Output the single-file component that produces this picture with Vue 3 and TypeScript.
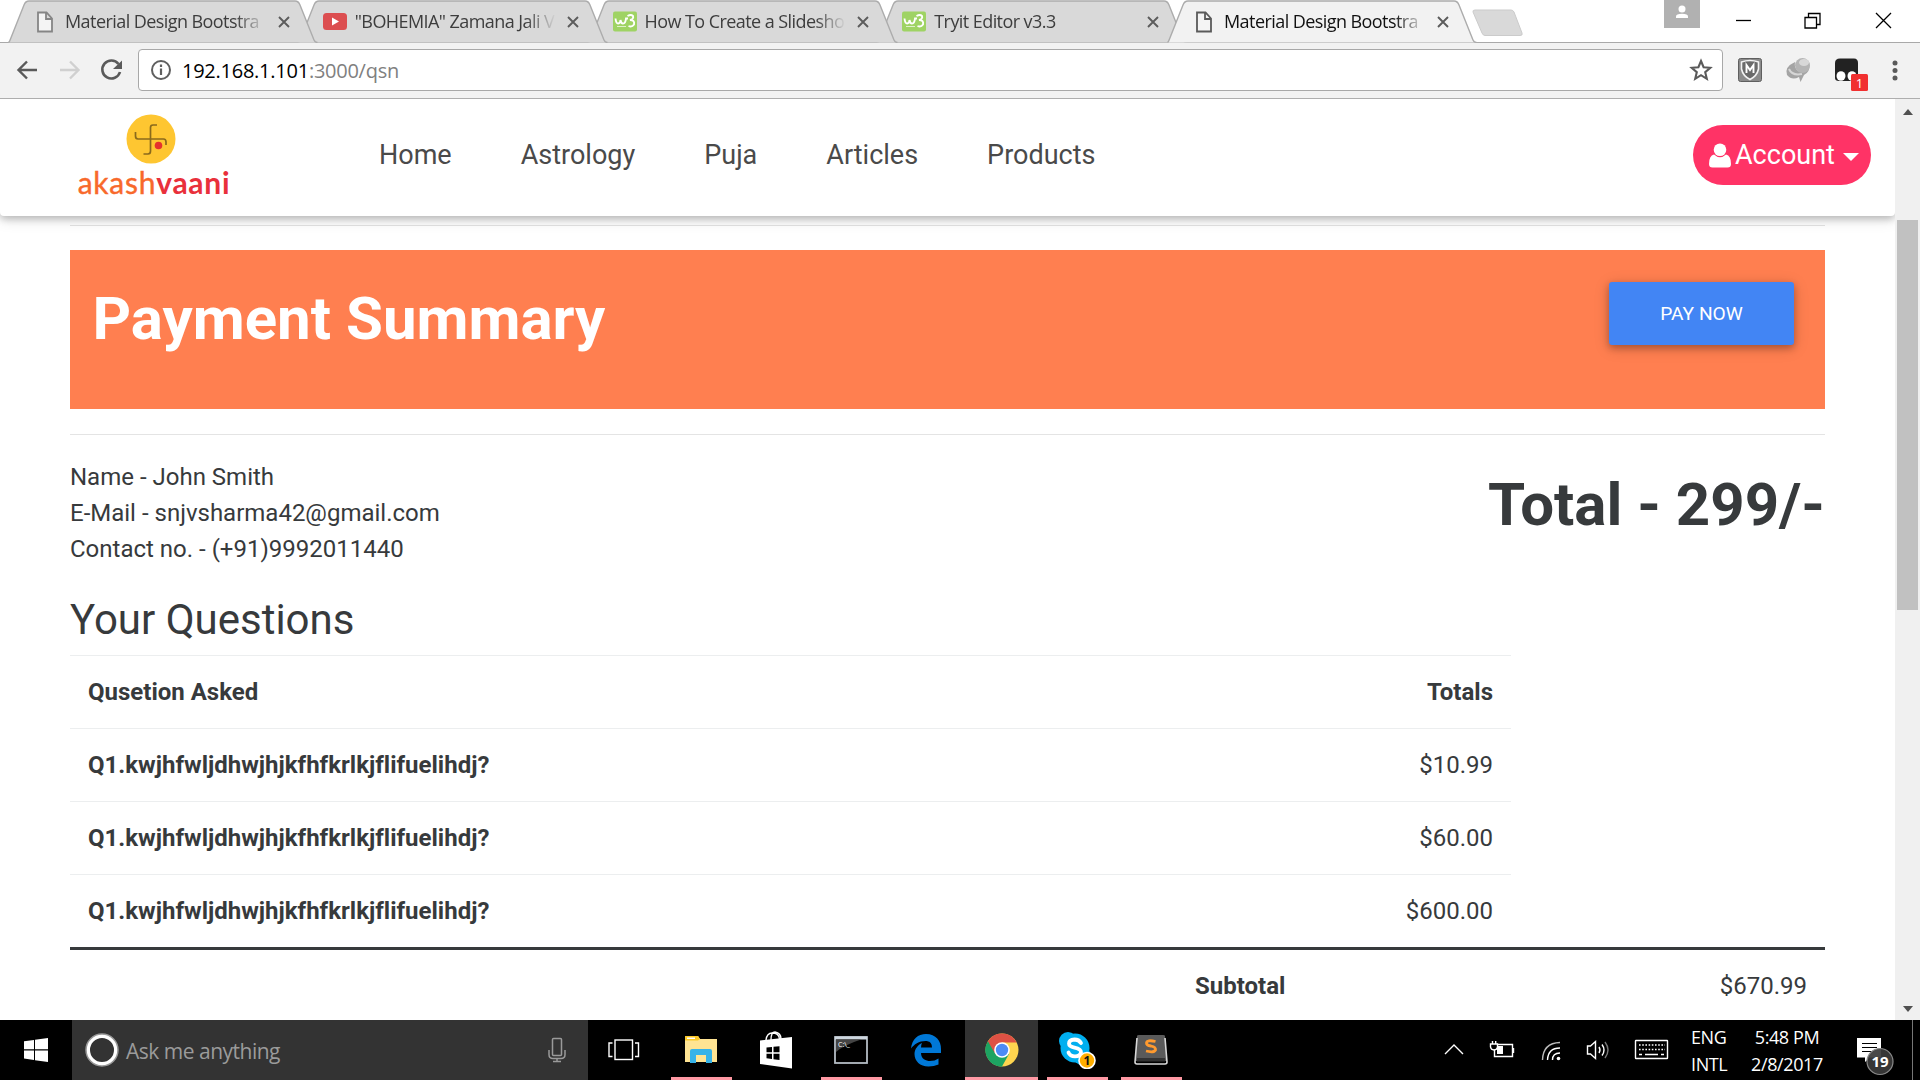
<script setup lang="ts">
interface Tab { title: string; icon: 'doc' | 'yt' | 'w3'; active?: boolean }

const tabs: Tab[] = [
  { title: 'Material Design Bootstra', icon: 'doc' },
  { title: '"BOHEMIA" Zamana Jali V', icon: 'yt' },
  { title: 'How To Create a Slidesho', icon: 'w3' },
  { title: 'Tryit Editor v3.3', icon: 'w3' },
  { title: 'Material Design Bootstra', icon: 'doc', active: true },
]
const links = ['Home', 'Astrology', 'Puja', 'Articles', 'Products']
const questions = [
  { text: 'Q1.kwjhfwljdhwjhjkfhfkrlkjflifuelihdj?', price: '$10.99' },
  { text: 'Q1.kwjhfwljdhwjhjkfhfkrlkjflifuelihdj?', price: '$60.00' },
  { text: 'Q1.kwjhfwljdhwjhjkfhfkrlkjflifuelihdj?', price: '$600.00' },
]
</script>

<template>
  <div class="screen">
    <div class="strip">
      <div v-for="(t, i) in tabs" :key="i" class="tab" :class="{ active: t.active }" :style="{ zIndex: t.active ? 10 : 8 - i }">
        <svg class="shape" width="311" height="43" viewBox="0 0 311 43">
          <path d="M0.5 42.5 Q1.500 42 2.500 39 L16 5 Q17.500 1 21 1 L287 1 Q290.500 1 292 5 L306 40 Q307 42.500 309.500 42.500 Z" :fill="t.active ? '#f2f2f2' : '#d9d9d9'" />
          <path d="M0.5 42.5 Q1.500 42 2.500 39 L16 5 Q17.500 1 21 1 L287 1 Q290.500 1 292 5 L306 40 Q307 42.500 309.500 42.500" fill="none" stroke="#acacac" stroke-width="1.4" />
        </svg>
        <svg v-if="t.icon === 'doc'" class="fav" width="24" height="24" viewBox="0 0 24 24">
          <path d="M5 2.500 H13.500 L19 8.500 V21.500 H5 Z M13 2.500 V9 H19" fill="#f4f4f4" :stroke="t.active ? '#5a5a5a' : '#858585'" stroke-width="1.8" />
        </svg>
        <svg v-else-if="t.icon === 'yt'" class="fav" width="24" height="24" viewBox="0 0 24 24">
          <rect y="3" width="24" height="17" rx="3.500" fill="#dc4e50" /><path d="M9 7.500 L16 11.500 L9 15.500 Z" fill="#fff" />
        </svg>
        <svg v-else class="fav" width="24" height="24" viewBox="0 0 24 24">
          <rect y="1.500" width="24" height="20" rx="2" fill="#9fd364" />
          <path d="M2.500 8.500 Q3 13.500 5.200 13.500 Q7.200 13.500 7.500 10 Q8 13.500 10 13.500 Q12.500 13.500 13 8.500 H15 M14.500 6 Q18 4 20 6 Q21 9 17 10 Q22 10 21 14.500 Q19 17.500 15.500 16" fill="none" stroke="#fff" stroke-width="1.900" />
          <path d="M4 16.500 H13" stroke="#dff1cb" stroke-width="1" />
        </svg>
        <span class="title">{{ t.title }}</span>
        <svg class="x" width="12" height="12" viewBox="0 0 12 12"><path d="M1 1 L11 11 M11 1 L1 11" stroke="#5c5c5c" stroke-width="1.9" /></svg>
      </div>
      <svg class="newtab" width="52" height="28" viewBox="0 0 52 28"><path d="M3 1 H39 Q41 1 42 3 L50 24 Q51 26.500 48 26.500 H13 Q11 26.500 10 24 L1 3 Q0.500 1 3 1 Z" fill="#d9d9d9" stroke="#cbcbcb" /></svg>
      <div class="winctl">
        <div class="avatar"><svg width="36" height="28" viewBox="0 0 36 28"><circle cx="18" cy="9" r="3.500" fill="#fff" /><path d="M12 18 V16.500 Q12 14 18 13.800 Q24 14 24 16.500 V18 Z" fill="#fff" /></svg></div>
        <svg class="wbtns" width="156" height="42" viewBox="0 0 156 42" fill="none" stroke="#000" stroke-width="1.3">
          <path d="M0 20.500 H15" /><path d="M69 17.500 H80.500 V28 H69 Z M72.500 17.500 V13.500 H84 V24.500 H80.500" /><path d="M140 13 L155 28 M155 13 L140 28" />
        </svg>
      </div>
    </div>

    <div class="toolbar">
      <svg class="navs" width="138" height="54" viewBox="0 0 138 54" fill="none" stroke-width="2.4">
        <path d="M37 27 H19 M27 18.500 L18.500 27 L27 35.500" stroke="#5a5a5a" />
        <path d="M60 27 H78 M70 18.500 L78.500 27 L70 35.500" stroke="#d0d0d0" />
        <path d="M118.500 21 A9 9 0 1 0 120 29" stroke="#5a5a5a" stroke-width="2.600" /><path d="M122 17.500 V26 H113 Z" fill="#5a5a5a" />
      </svg>
      <div class="omni">
        <svg width="22" height="22" viewBox="0 0 22 22"><circle cx="11" cy="11" r="9" fill="none" stroke="#5f5f5f" stroke-width="2" /><path d="M11 9.500 V16 M11 5.500 V8" stroke="#5f5f5f" stroke-width="2.200" /></svg>
        <span class="url">192.168.1.101<i>:3000/qsn</i></span>
        <svg class="star" width="24" height="24" viewBox="0 0 24 24"><path d="M12 3 L14.600 9.200 L21.300 9.800 L16.200 14.200 L17.800 20.800 L12 17.200 L6.200 20.800 L7.800 14.200 L2.700 9.800 L9.400 9.200 Z" fill="none" stroke="#5a5a5a" stroke-width="2.100" /></svg>
      </div>
      <svg class="exts" width="197" height="54" viewBox="1 0 197 54">
        <rect x="16.500" y="15.500" width="23" height="23" rx="2" fill="#8a8a8a" stroke="#5f5f5f" />
        <path d="M19.500 19 Q28 16 36.500 19 V26 Q35 33 28 36.500 Q21 33 19.500 26 Z" fill="#6a6a6a" stroke="#f2f2f2" stroke-width="1.600" />
        <path d="M24.500 30 V22 L28 27 L31.500 22 V30" fill="none" stroke="#fff" stroke-width="1.900" />
        <path d="M73 19 Q62 24 65 32 Q70 38 77 34 L78.500 39 L82 32 Q88 29 87.500 22 Q84 31 76 28 Q72 25 73 19 Z" fill="#a4a4a4" />
        <ellipse cx="80.500" cy="22.500" rx="7.500" ry="7.500" fill="#b5b5b5" /><ellipse cx="82" cy="19.500" rx="5" ry="3.500" fill="#d8d8d8" />
        <path d="M67 26 Q70 33 80 31" stroke="#d6d6d6" stroke-width="2" fill="none" />
        <path d="M113 35 V20 Q113 15.500 118 15.500 H132 Q136 15.500 136 20 V38 H117 Q113 38 113 35 Z" fill="#222" /><ellipse cx="119" cy="33" rx="4.500" ry="4.800" fill="#fff" /><ellipse cx="130" cy="33" rx="4.500" ry="4.800" fill="#fff" />
        <rect x="129" y="31" width="17" height="17" rx="1.500" fill="#f13030" /><text x="137.500" y="44.500" fill="#fff" font-size="13" text-anchor="middle">1</text>
        <circle cx="173" cy="20" r="2.500" fill="#5a5a5a" /><circle cx="173" cy="27.500" r="2.500" fill="#5a5a5a" /><circle cx="173" cy="35" r="2.500" fill="#5a5a5a" />
      </svg>
    </div>

    <div class="viewport">
      <div class="page">
        <header class="navbar">
          <div class="logo">
            <svg width="50" height="50" viewBox="0 0 50 50">
              <circle cx="25" cy="25" r="24.500" fill="#fec631" />
              <path d="M31 11 H27 Q24.500 11 24.500 13.500 V37 Q24.500 40 22 40 H17.500 M9.500 18 V22 Q9.500 25 12 25 H37.500 Q40 25 40 28 V31" fill="none" stroke="#8a6a1c" stroke-width="1.700" />
              <circle cx="32.500" cy="31.500" r="3.800" fill="#e5322d" />
            </svg>
            <div class="brand"><span>akash</span><b>vaani</b></div>
          </div>
          <nav><a v-for="l in links" :key="l">{{ l }}</a></nav>
          <button class="account">
            <svg width="22" height="25" viewBox="0 0 22 25" fill="#fff"><circle cx="11" cy="6.800" r="6.300" /><path d="M5 11.500 Q11 17 17 11.500 Q22 12.500 22 21 Q22 24.500 18.500 24.500 H3.500 Q0 24.500 0 21 Q0 12.500 5 11.500 Z" /></svg>
            <span>Account</span><i class="caret"></i>
          </button>
        </header>
        <main>
          <hr class="first" />
          <section class="banner"><h1>Payment Summary</h1><button class="pay">PAY NOW</button></section>
          <hr class="second" />
          <section class="info">
            <div class="who"><div>Name - John Smith</div><div>E-Mail - snjvsharma42@gmail.com</div><div>Contact no. - (+91)9992011440</div></div>
            <div class="total">Total - 299/-</div>
          </section>
          <h2>Your Questions</h2>
          <div class="rows">
            <div class="row head"><b>Qusetion Asked</b><b>Totals</b></div>
            <div v-for="(q, i) in questions" :key="i" class="row"><b>{{ q.text }}</b><span>{{ q.price }}</span></div>
          </div>
          <div class="sub"><b>Subtotal</b><span>$670.99</span></div>
        </main>
      </div>
      <div class="scroll"><i class="up"></i><div class="thumb"></div><i class="down"></i></div>
    </div>

    <footer class="taskbar">
      <div class="start"><svg width="24" height="24" viewBox="0 0 24 24" fill="#fff"><path d="M0 3.300 L10 1.900 V11.300 H0 Z M11 1.700 L24 0 V11.300 H11 Z M0 12.500 H10 V22 L0 20.600 Z M11 12.500 H24 V24 L11 22.200 Z" /></svg></div>
      <div class="search">
        <svg width="34" height="34" viewBox="0 0 34 34"><circle cx="17" cy="17" r="14" fill="none" stroke="#fff" stroke-width="4" /><circle cx="17" cy="17" r="16" fill="none" stroke="#999" stroke-width="1.500" /></svg>
        <span>Ask me anything</span>
        <svg class="mic" width="18" height="26" viewBox="0 0 18 26" fill="none" stroke="#9a9a9a" stroke-width="1.500"><rect x="4.500" y="1.500" width="9" height="17" rx="1" /><path d="M1 13 V17.500 Q1 21.500 5 21.500 H13 Q17 21.500 17 17.500 V13 M9 21.500 V24.500 M5 24.500 H13" /></svg>
      </div>
      <div class="app tv"><svg width="32" height="22" viewBox="0 0 32 22" fill="none" stroke="#fff" stroke-width="1.400"><rect x="7" y="1" width="17.500" height="19.500" /><path d="M4.500 4 H1 V17.500 H4.500 M27 4 H30.500 V17.500 H27" /></svg></div>
      <div class="app open"><svg width="34" height="30" viewBox="0 0 34 30"><path d="M1 2 Q1 1 2 1 H14 L16 4 H33 V27 H1 Z" fill="#ffe493" /><path d="M1 2 Q1 1 2 1 H14 L16 4 L14 5.500 H1 Z" fill="#fbc928" /><rect x="3" y="2.500" width="8" height="1.500" fill="#fff" /><path d="M6 28 V16 Q6 14 8 14 H26 Q28 14 28 16 V28 H22 V20 H12 V28 Z" fill="#37b3e8" /></svg></div>
      <div class="app"><svg width="34" height="38" viewBox="0 0 34 38"><path d="M1 9.500 L33 6 V37.500 L1 33 Z" fill="#fff" /><path d="M7 9 Q8 2 13 2 Q20 2 20.500 8 M12 9 Q12 1 16 1 Q22 2 22 8" fill="none" stroke="#fff" stroke-width="1.400" /><path d="M7.500 16.500 L13 16 V21.300 H7.500 Z M14.500 15.800 L20.500 15.200 V21.300 H14.500 Z M7.500 22.700 H13 V28 L7.500 27.300 Z M14.500 22.700 H20.500 V29 L14.500 28.200 Z" fill="#000" /></svg></div>
      <div class="app open"><svg width="34" height="28" viewBox="0 0 34 28"><rect x="1" y="1" width="32" height="26" fill="#000" stroke="#b4bcc4" stroke-width="1.800" /><path d="M1 0.500 H33 V3.500 H1 Z" fill="#cdd6df" /><path d="M2 3.500 H27 Q10 9 2 16 Z" fill="#444" /><text x="4" y="11" font-size="7" fill="#fff">C:\_</text></svg></div>
      <div class="app"><svg width="32" height="34" viewBox="0 0 32 34"><path d="M1 15.500 C2 6 8 1 16 1 C26 1 31 8 31 16 V20 H11 C11 26 16 28 20 28 Q25 28 28.500 25.500 V31.500 Q24 33.500 18.500 33.500 C10 33.500 4.500 28 4.500 21 C4.500 16 8 12 12 10 Q11 12 11 14.500 H22 C22 10 19.500 8 15.500 8 C9 8 4 11.500 1 15.500 Z" fill="#0078d7" /></svg></div>
      <div class="app open current"><svg width="34" height="34" viewBox="0 0 34 34"><circle cx="17" cy="17" r="16.500" fill="#fed44f" /><path d="M17 17 L2.700 8.700 A16.500 16.500 0 0 0 17 33.500 L24 21 Z" fill="#1da462" /><path d="M17 17 L10 21 L2.700 8.700 A16.500 16.500 0 0 1 31.300 8.700 L31.500 9.500 H17 Z" fill="#dd5144" /><path d="M3 8.500 L10.500 21.500 L17 33.500 A16.500 16.500 0 0 1 3 8.500 Z" fill="#1da462" /><circle cx="17" cy="17" r="7.800" fill="#fff" /><circle cx="17" cy="17" r="6.200" fill="#4c8bf5" /></svg></div>
      <div class="app open"><svg width="38" height="38" viewBox="0 0 38 38"><circle cx="10" cy="10" r="9" fill="#00aff0" /><circle cx="24" cy="25" r="9" fill="#00aff0" /><circle cx="17" cy="17" r="14.500" fill="#00aff0" /><path d="M23 12 Q21 8.500 16.500 8.500 Q11 8.800 11 12.500 Q11 15.500 16.500 16.700 Q23 18 23 21.200 Q22.500 25.300 17 25.300 Q12 25.300 10.500 21.500" fill="none" stroke="#fff" stroke-width="3.800" stroke-linecap="round" /><circle cx="29" cy="29.500" r="8" fill="#ffae00" stroke="#fff" stroke-width="1.600" /><text x="29" y="34" font-size="12" font-weight="700" text-anchor="middle" fill="#111">1</text></svg></div>
      <div class="app open last"><svg width="34" height="32" viewBox="0 0 34 32"><path d="M3 2 Q3 1 5 1 H29 Q31 1 31 2 L33 27 H1 Z" fill="#5a5a5a" /><path d="M3 4 L1 28 Q1 30 3 30 H31 Q33 30 33 28 L31 4" fill="none" stroke="#d8d8d8" stroke-width="1.600" /><path d="M3 24 H31 V27.500 H3 Z" fill="#333" /><path d="M21.500 7.500 Q13 5.500 12.500 9 Q12.500 11.500 17 12 Q22 13 21.500 16 Q20 19 12 17" fill="none" stroke="#ff9a2e" stroke-width="2.800" /></svg></div>
      <div class="tray">
        <svg width="230" height="60" viewBox="1440 1020 230 60" fill="none" stroke="#fff" stroke-width="1.400">
          <path d="M1445 1054 L1454 1045 L1463 1054" />
          <path d="M1497 1044.500 H1512.500 V1056.500 H1494.500 V1050 M1513.500 1048 V1053" /><path d="M1497 1046 H1503 V1054 H1497 Z" fill="#fff" stroke="none" /><path d="M1490.500 1044 H1497.500 V1047 Q1497 1050 1494 1050 Q1491 1050 1490.500 1047 Z M1492.500 1041 V1044 M1495.700 1041 V1044" />
          <circle cx="1558.500" cy="1058.500" r="1.800" fill="#fff" stroke="none" /><path d="M1552.500 1060 Q1552.500 1053 1560 1053" /><path d="M1547.500 1060 Q1548 1048 1560 1048" /><path d="M1542.500 1060 Q1543 1043 1560 1042.500" stroke="#bbb" />
          <path d="M1587.500 1046 H1590.500 L1595.500 1041.500 V1058.500 L1590.500 1054 H1587.500 Z" /><path d="M1599 1047 Q1601 1050 1599 1053" /><path d="M1602 1044.500 Q1606 1050 1602 1055.500" /><path d="M1605 1042 Q1611 1050 1605 1058" stroke="#777" />
          <rect x="1635.500" y="1040.500" width="32" height="18" rx="0.500" /><path d="M1639 1045 H1665 M1639 1049.500 H1665" stroke-dasharray="1.600 1.600" /><path d="M1639 1054.500 H1642 M1645 1054.500 H1658 M1661 1054.500 H1664" />
        </svg>
        <div class="lang">ENG<br />INTL</div>
        <div class="clock">5:48 PM<br />2/8/2017</div>
        <svg class="note" width="45" height="60" viewBox="1855 1020 45 60"><path d="M1858 1038 H1882 V1057.500 H1871 L1866 1062 V1057.500 H1858 Z" fill="#fff" /><path d="M1863 1043.500 H1878 M1863 1047.500 H1878 M1863 1051.500 H1873" stroke="#000" stroke-width="1.200" /><circle cx="1881" cy="1061.500" r="13" fill="#3a3a3a" fill-opacity=".93" stroke="#8a8a8a" stroke-width="1.200" /><text x="1881" y="1067" font-size="15" font-weight="700" fill="#fff" text-anchor="middle">19</text></svg>
      </div>
    </footer>
  </div>
</template>

<style>
html, body { margin: 0; background: #fff; overflow: hidden; }
</style>

<style scoped>
* { box-sizing: border-box; }
.screen { width: 1920px; height: 1080px; display: flex; flex-direction: column; overflow: hidden; background: #fff; font-family: "Open Sans", "Noto Sans", sans-serif; }
svg { display: block; flex: none; }
i { font-style: normal; }
.strip { height: 43px; flex: none; display: flex; padding-left: 8px; border-bottom: 1px solid #a9a9a9; background: #fff; }
.tab { position: relative; width: 289.75px; height: 43px; flex: none; display: flex; align-items: center; padding-left: 25px; font-size: 18px; color: #3d3d3d; }
.tab.active { color: #111; }
.shape { position: absolute; left: 0; top: 0; }
.fav { position: relative; margin-top: 1px; }
.title { position: relative; margin-left: 8px; width: 203px; white-space: nowrap; letter-spacing: -0.57px; line-height: 26px; margin-top: -1px; -webkit-mask-image: linear-gradient(90deg, #000 84%, transparent 99%); mask-image: linear-gradient(90deg, #000 84%, transparent 99%); }
.x { position: relative; margin-left: 9.500px; margin-top: 1px; }
.newtab { margin: 9px 0 0 15px; }
.winctl { margin-left: auto; display: flex; padding-right: 28px; }
.avatar { width: 36px; height: 28px; background: #b1b1b1; margin-right: 36px; }
.toolbar { height: 56px; flex: none; display: flex; background: #f2f2f2; border-bottom: 1px solid #aeaeae; }
.omni { width: 1585px; height: 42px; margin-top: 6px; border: 1px solid #a8a8a8; border-radius: 4px; background: #fff; display: flex; align-items: center; padding: 0 9px 0 11px; }
.url { margin-left: 10px; font-size: 20px; letter-spacing: -0.25px; color: #000; white-space: nowrap; }
.url i { color: #808080; }
.star { margin-left: auto; }
.viewport { height: 921px; flex: none; display: flex; font-family: Roboto, sans-serif; color: #373a3c; font-size: 24px; line-height: 36px; font-variant-ligatures: none; }
.page { width: 1895px; height: 921px; overflow: hidden; }
.navbar { position: relative; z-index: 1; height: 117px; background: #fff; display: flex; border-radius: 0 0 4px 4px; box-shadow: 0 3px 7px rgba(0,0,0,.2), 0 3px 15px rgba(0,0,0,.14); }
.logo { width: 150px; margin-left: 76px; padding-top: 15px; display: flex; flex-direction: column; align-items: center; }
.brand { font-family: Lato, sans-serif; font-size: 30px; line-height: 36px; color: #f8692b; white-space: nowrap; margin: 0 0 0 6px; letter-spacing: 0.75px; -webkit-text-stroke: 0.4px currentColor; }
.brand b { color: #e9303b; font-weight: 700; -webkit-text-stroke: 0; }
nav { display: flex; gap: 69px; margin-left: 153px; padding-top: 38px; font-size: 27px; color: #4a4a4a; white-space: nowrap; }
button { border: 0; font-family: inherit; }
.account { margin: 26px 24px 0 auto; width: 178px; height: 60px; border-radius: 30px; background: #ff3366; color: #fff; font-size: 27px; display: flex; align-items: center; padding: 0 0 0 16px; }
.account span { margin-left: 4px; }
.caret { margin-left: 8px; border: 8px solid transparent; border-top-color: #fff; border-bottom: 0; margin-top: 3px; }
main { padding: 0 70px; }
hr { margin: 0; border: 0; height: 1px; background: #e4e4e4; }
.first { margin-top: 9px; }
.banner { margin-top: 24px; height: 159px; background: #ff7f50; display: flex; justify-content: space-between; padding: 32px 31px 0 22.500px; }
h1 { margin: 1px 0 0; font-size: 60px; line-height: 72px; font-weight: 700; color: #fff; }
.pay { width: 185px; height: 63px; border-radius: 3px; background: #4285f4; color: #fff; font-size: 19.2px; box-shadow: 0 3px 7px rgba(0,0,0,.24), 0 3px 15px rgba(0,0,0,.18); }
.second { margin-top: 25px; }
.info { display: flex; justify-content: space-between; margin-top: 24px; height: 124px; }
.total { font-size: 60px; font-weight: 700; line-height: 72px; margin-top: 10px; }
h2 { margin: 0; font-size: 42px; font-weight: 400; line-height: 46px; height: 72px; padding-top: 14px; }
.rows { width: 1441px; }
b { font-weight: 700; }
.row { height: 73px; border-top: 1px solid #eceeef; display: flex; justify-content: space-between; padding: 18px 18px; }
.sub { border-top: 3px solid #373a3c; display: flex; justify-content: space-between; padding: 18px 18px 18px 1125px; }
.scroll { width: 25px; background: #f0f0f0; display: flex; flex-direction: column; align-items: center; height: 921px; }
.up { margin-top: 10px; border: 5.5px solid transparent; border-bottom: 6px solid #505050; border-top: 0; }
.down { border: 5.5px solid transparent; border-top: 6px solid #505050; border-bottom: 0; margin: auto 0 8px; }
.thumb { width: 21px; height: 390px; background: #c1c1c1; margin-top: 105px; }
.taskbar { height: 60px; flex: none; background: #000; display: flex; }
.start { width: 72px; padding: 18px 24px; }
.search { width: 516px; background: #333; display: flex; align-items: center; padding-left: 13px; color: #9b9b9b; font-size: 21px; }
.search span { margin-left: 7px; letter-spacing: -0.5px; white-space: nowrap; margin-top: 2px; }
.mic { margin: 0 22px 0 auto; }
.app { position: relative; width: 75px; height: 60px; flex: none; display: flex; align-items: center; justify-content: center; }
.app.tv { width: 74px; margin-right: 1px; padding-right: 2px; }
.app.open::after { content: ""; position: absolute; left: 8px; bottom: 0; width: 61px; height: 3px; background: #ff99a4; }
.app.current { background: #333; width: 73px; margin: 0 1px 0 2px; }
.app.current::after { left: 0; width: 73px; }
.app.last { margin-left: -1px; }
.tray { margin-left: auto; display: flex; border-right: 1px solid #777; margin-right: 7px; color: #fff; font-size: 18px; line-height: 27px; height: 60px; white-space: nowrap; letter-spacing: -0.4px; }
.lang { width: 56px; padding: 4px 0 0 21px; }
.clock { width: 124px; text-align: center; padding: 4px 2px 0 0; }
.note { margin-left: 4px; margin-right: 13px; letter-spacing: 0; }
</style>
